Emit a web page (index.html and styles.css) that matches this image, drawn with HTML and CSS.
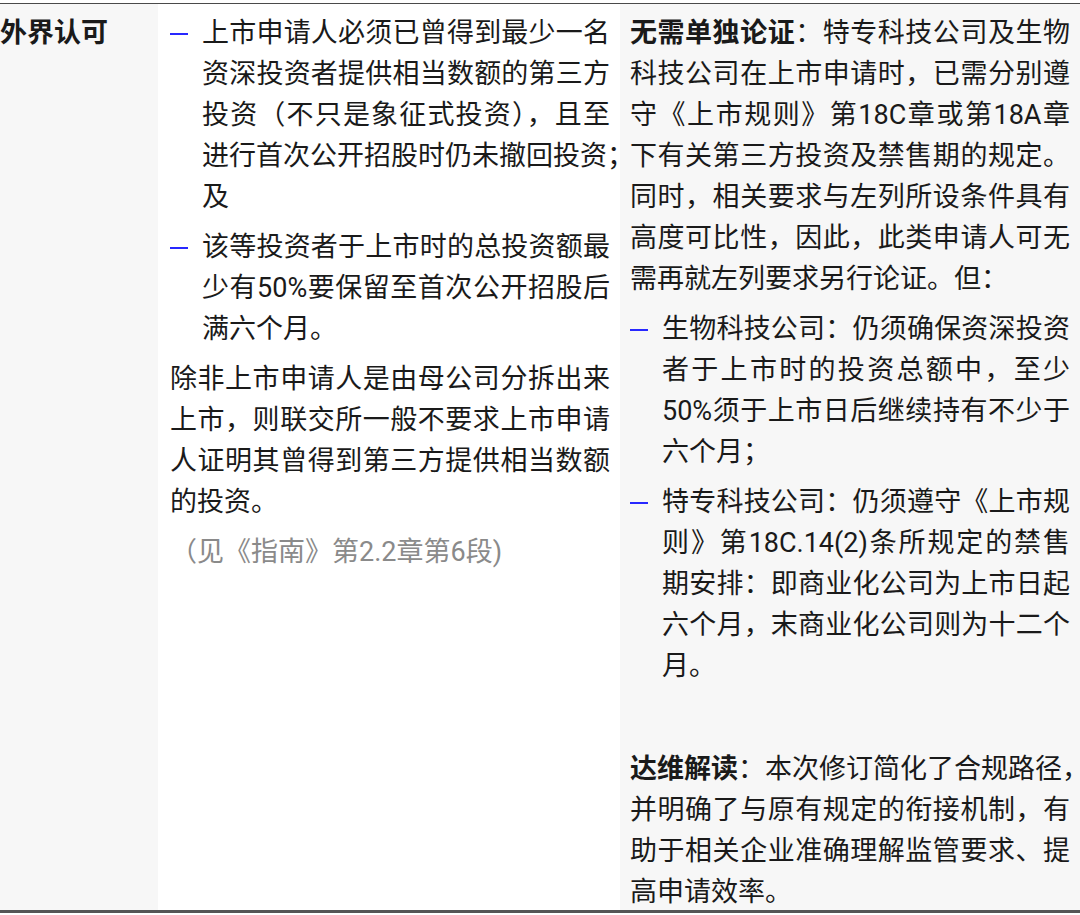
FILE: index.html
```html
<!DOCTYPE html>
<html lang="zh-CN">
<head>
    <meta charset="UTF-8">
    <meta name="viewport" content="width=device-width, initial-scale=1.0">
    <title>外界认可 - 规则对照</title>
    <link rel="stylesheet" href="styles.css">
</head>
<body>
    <div class="compare">
        <div class="col-item">外界认可</div>
        <div class="col-old">
            <ul class="dash-list">
                <li>上市申请人必须已曾得到最少一名资深投资者提供相当数额的第三方投资（不只是象征式投资），且至<span class="line">进行首次公开招股时仍未撤回投资；</span>及</li>
                <li>该等投资者于上市时的总投资额最少有50%要保留至首次公开招股后满六个月。</li>
            </ul>
            <p>除非上市申请人是由母公司分拆出来上市，则联交所一般不要求上市申请人证明其曾得到第三方提供相当数额的投资。</p>
            <p class="note">（见《指南》第2.2章第6段)</p>
        </div>
        <div class="col-new">
            <p><strong>无需单独论证</strong>：特专科技公司及生物科技公司在上市申请时，已需分别遵守<span class="line">《上市规则》第18C章或第18A章</span>下有关第三方投资及禁售期的规定。同时，相关要求与左列所设条件具有高度可比性，因此，此类申请人可无需再就左列要求另行论证。但：</p>
            <ul class="dash-list">
                <li>生物科技公司：仍须确保资深投资者于上市时的投资总额中，至少50%须于上市日后继续持有不少于六个月；</li>
                <li>特专科技公司：仍须遵守《上市规则》第18C.14(2)条所规定的禁售期安排：即商业化公司为上市日起六个月，末商业化公司则为十二个月。</li>
            </ul>
            <p class="remark"><span class="line"><strong>达维解读</strong>：本次修订简化了合规路径，</span>并明确了与原有规定的衔接机制，有助于相关企业准确理解监管要求、提高申请效率。</p>
        </div>
    </div>
</body>
</html>
```

FILE: styles.css
```css
body {
    margin: 0;
    padding-top: 3px;
    background: #ffffff;
    font-family: Roboto, "Noto Sans CJK SC", sans-serif;
    color: #1a1a1a;
}

.compare {
    display: grid;
    grid-template-columns: 158px 462px 460px;
    width: 1080px;
    border-top: 1px solid #4a4a4a;
    border-bottom: 3px solid #555555;
    box-shadow: 0 3px 0 #e6e6e6;
    font-size: 27px;
    line-height: 41px;
    text-align: justify;
}

.col-item {
    padding: 9px 0 0 0;
    background-color: #f7f7f7;
    font-weight: bold;
    white-space: nowrap;
}

.col-old {
    padding: 9px 10px 0 12px;
    background-color: #ffffff;
}

.col-new {
    padding: 9px 10px 0 10px;
    background-color: #f7f7f7;
}

.compare p {
    margin: 0 0 9px;
}

.compare strong {
    font-weight: bold;
}

.dash-list {
    list-style: none;
    margin: 0 0 9px;
    padding: 0;
}

.dash-list li {
    position: relative;
    padding-left: 32px;
    margin-bottom: 9px;
}

.dash-list li::before {
    content: "";
    position: absolute;
    left: 0;
    top: 20px;
    width: 18px;
    height: 2px;
    background-color: #2828ff;
}

/* a line kept whole, punctuation may hang past the edge */
.line {
    white-space: nowrap;
}

.note {
    color: #8a8a8a;
    text-align: left;
}

.remark {
    margin-top: 62px !important;
    margin-bottom: -3px !important;
}
```
